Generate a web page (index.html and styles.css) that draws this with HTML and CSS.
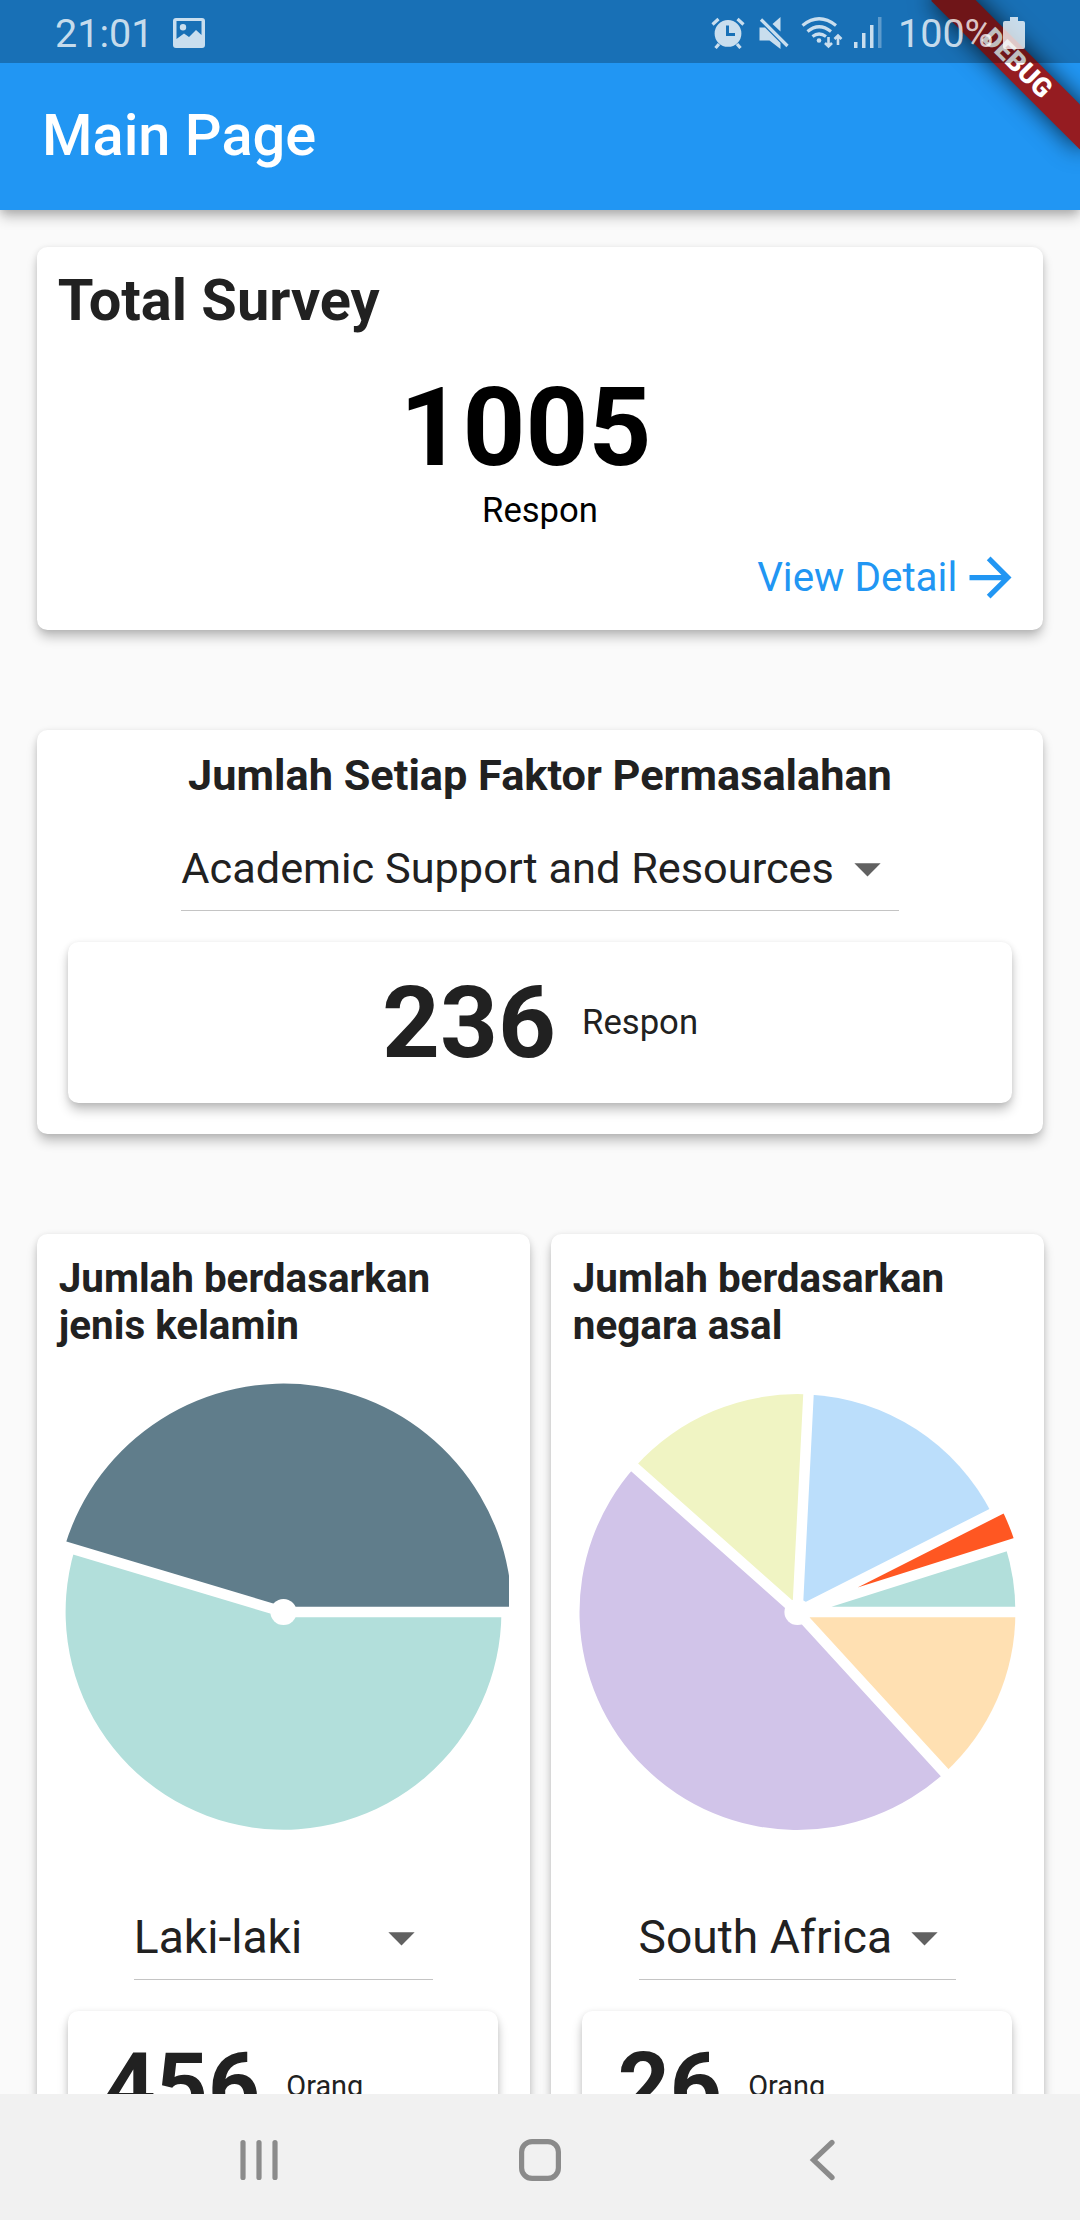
FILE: index.html
```html
<!DOCTYPE html>
<html lang="id">
<head>
<meta charset="utf-8">
<title>Main Page</title>
<link rel="stylesheet" href="styles.css">
</head>
<body>
<div class="screen">
  <header class="header">
    <div class="status-bar">
      <span class="clock">21:01</span>
      <svg class="icon-picture" width="32" height="30" viewBox="0 0 32 30"><path fill-rule="evenodd" d="M3 0H29a3 3 0 0 1 3 3V27a3 3 0 0 1-3 3H3a3 3 0 0 1-3-3V3a3 3 0 0 1 3-3ZM3.500 3V21L11 15.500 16 19 23 12 28.500 17V3ZM10 6a3.200 3.200 0 1 1 0 6.400a3.200 3.200 0 1 1 0-6.400Z"/></svg>
      <div class="status-right">
        <svg class="icon-alarm" width="34" height="32" viewBox="0 0 34 32"><path fill-rule="evenodd" d="M17 3a13.400 13.400 0 1 1 0 26.800a13.400 13.400 0 1 1 0-26.800ZM15 8.500V19H24V16H18V8.500Z"/><path class="line" d="M1.500 7.500L7.500 2M32.500 7.500L26.500 2M4.500 31L8 27M29.500 31L26 27"/></svg>
        <svg class="icon-mute" width="30" height="32" viewBox="0 0 30 32"><path d="M0.500 10.500H6L21.500 26V32L10.500 23.500H0.500ZM13.500 7L21.500 0V14.500Z"/><path class="line" d="M2 2.500L28.500 29"/></svg>
        <svg class="icon-wifi" width="42" height="32" viewBox="0 0 42 32"><path class="line" d="M1.500 8.500Q18 -5 35 8.500M6.500 14.500Q18 5 30 14.500M11.500 19.500Q18 14.500 25 19.500"/><circle cx="18" cy="23.500" r="2.300"/><path class="line thin" d="M27.500 20V29M24 26L27.500 29.500L31 26M37 28V19M33.500 22L37 18.500L40.500 22"/></svg>
        <svg class="icon-signal" width="28" height="31" viewBox="0 0 28 31"><path d="M0 25h3.500v6h-3.500ZM8 16h3.500v15h-3.500ZM16 8h3.500v23h-3.500Z"/><path opacity=".4" d="M24 0h3.500v31h-3.500Z"/></svg>
        <span class="battery-level">100%</span>
        <svg class="icon-battery" width="22" height="32" viewBox="0 0 22 32"><path d="M7 0H15V4H20a2 2 0 0 1 2 2V30a2 2 0 0 1-2 2H2a2 2 0 0 1-2-2V6a2 2 0 0 1 2-2H7Z"/></svg>
      </div>
    </div>
    <h1 class="app-bar">Main Page</h1>
    <div class="ribbon-corner"><div class="ribbon">DEBUG</div></div>
  </header>

  <main class="content">
    <section class="card total">
      <h2 class="total-title">Total Survey</h2>
      <div class="total-count">1005</div>
      <div class="unit total-unit">Respon</div>
      <div class="view-detail">
        <span>View Detail</span>
        <svg width="63" height="63" viewBox="0 0 24 24"><path d="M12 4l-1.410 1.410L16.170 11H4v2h12.170l-5.580 5.590L12 20l8-8z"/></svg>
      </div>
    </section>

    <section class="card factor">
      <h2 class="factor-title">Jumlah Setiap Faktor Permasalahan</h2>
      <div class="dropdown dropdown-factor">
        <span>Academic Support and Resources</span>
        <svg width="63" height="63" viewBox="0 0 24 24"><path d="M7 10l5 5 5-5z"/></svg>
      </div>
      <div class="card result">
        <span class="result-count">236</span>
        <span class="unit">Respon</span>
      </div>
    </section>

    <div class="charts">
      <section class="card chart-card">
        <h2 class="chart-title">Jumlah berdasarkan jenis kelamin</h2>
        <svg class="pie" width="451" height="460" viewBox="-225.500 -230 451 460">
          <path fill="#607d8b" d="M0 0L-218.800 -65.500A228.400 228.400 0 0 1 228.400 0Z"/>
          <path fill="#b2dfdb" d="M0 0H217.900A217.900 217.900 0 1 1 -208.800 -62.500Z"/>
          <path class="gap" d="M0 0H240M0 0L-229.900 -68.800"/>
          <circle r="13.100" fill="#fff"/>
        </svg>
        <div class="dropdown dropdown-gender">
          <span>Laki-laki</span>
          <svg width="63" height="63" viewBox="0 0 24 24"><path d="M7 10l5 5 5-5z"/></svg>
        </div>
        <div class="card result">
          <span class="result-count">456</span>
          <span class="unit">Orang</span>
        </div>
      </section>

      <section class="card chart-card">
        <h2 class="chart-title">Jumlah berdasarkan negara asal</h2>
        <svg class="pie" width="451" height="460" viewBox="-225.500 -230 451 460">
          <path fill="#ffe0b2" d="M0 0H217.900A217.900 217.900 0 0 1 147.200 160.700Z"/>
          <path fill="#d1c4e9" d="M0 0L147.200 160.700A217.900 217.900 0 0 1 -162.900 -144.700Z"/>
          <path fill="#f0f4c3" d="M0 0L-162.900 -144.700A217.900 217.900 0 0 1 11 -217.600Z"/>
          <path fill="#bbdefb" d="M0 0L11 -217.600A217.900 217.900 0 0 1 194.400 -98.400Z"/>
          <path fill="#ff5722" d="M0 0L203.800 -103.200A228.400 228.400 0 0 1 217.800 -68.900Z"/>
          <path fill="#b2dfdb" d="M0 0L207.800 -65.700A217.900 217.900 0 0 1 217.900 0Z"/>
          <path class="gap" d="M0 0H240M0 0L162.100 177M0 0L-179.500 -159.400M0 0L12.100 -239.700M0 0L214.100 -108.400M0 0L228.800 -72.400"/>
          <circle r="13.100" fill="#fff"/>
        </svg>
        <div class="dropdown dropdown-country">
          <span>South Africa</span>
          <svg width="63" height="63" viewBox="0 0 24 24"><path d="M7 10l5 5 5-5z"/></svg>
        </div>
        <div class="card result">
          <span class="result-count">26</span>
          <span class="unit">Orang</span>
        </div>
      </section>
    </div>
  </main>

  <nav class="nav-bar">
    <svg width="42" height="42" viewBox="0 0 42 42"><path d="M5 3.500V38.500M21 3.500V38.500M37 3.500V38.500"/></svg>
    <svg width="42" height="42" viewBox="0 0 42 42"><rect x="2.600" y="2.600" width="36.800" height="36.800" rx="10.500"/></svg>
    <svg width="42" height="42" viewBox="0 0 42 42"><path d="M32 3.500L13.500 21L32 38.500"/></svg>
  </nav>
</div>
</body>
</html>
```
FILE: styles.css
```css
* {
  box-sizing: border-box;
}

body {
  margin: 0;
  font-family: Roboto, "Liberation Sans", sans-serif;
  color: #212121;
}

h1,
h2 {
  margin: 0;
}

svg {
  display: block;
  flex: none;
}

.screen {
  width: 1080px;
  height: 2220px;
  display: flex;
  flex-direction: column;
  overflow: hidden;
  background: #fafafa;
}

/* Header: status bar scrim above the app bar */
.header {
  position: relative;
  z-index: 1;
  flex: none;
  height: 210px;
  background: #2196f3;
  box-shadow: 0 8px 12px -1px rgba(0, 0, 0, .24), 0 2px 8px rgba(0, 0, 0, .12);
}

.status-bar {
  position: relative;
  z-index: 2;
  height: 63px;
  padding: 2px 55px 0 55px;
  display: flex;
  align-items: center;
  background: rgba(0, 0, 0, .25);
  color: rgba(255, 255, 255, .77);
  fill: rgba(255, 255, 255, .77);
  font-size: 39.500px;
  line-height: 46px;
}

.clock {
  padding-top: 3px;
}

.icon-picture {
  margin-left: 20px;
}

.status-right {
  display: flex;
  align-items: center;
  margin-left: auto;
}

.icon-mute {
  margin-left: 14px;
}

.icon-wifi {
  margin-left: 12px;
}

.icon-signal {
  margin-left: 11px;
}

.battery-level {
  width: 105px;
  margin-left: 16px;
  padding-top: 3px;
}

.line {
  fill: none;
  stroke: rgba(255, 255, 255, .77);
  stroke-width: 3.200px;
}

.thin {
  stroke-width: 2.600px;
}

.app-bar {
  height: 147px;
  padding: 0 42px;
  font-size: 57.750px;
  font-weight: 500;
  line-height: 144px;
  color: #fff;
}

.ribbon-corner {
  position: absolute;
  top: 0;
  right: 0;
  z-index: 1;
  width: 260px;
  height: 210px;
  overflow: hidden;
}

.ribbon {
  position: absolute;
  top: 73.500px;
  left: 155px;
  width: 210px;
  height: 31.500px;
  transform: rotate(45deg);
  transform-origin: 105px -73.500px;
  background: #951c21;
  box-shadow: 0 0 24px rgba(0, 0, 0, .75);
  color: #fff;
  font-size: 26.800px;
  font-weight: 900;
  line-height: 31.500px;
  text-align: center;
}

/* Scrolling content */
.content {
  flex: 1;
  min-height: 0;
  overflow: hidden;
  padding: 36.750px 36.750px 0;
  display: flex;
  flex-direction: column;
  gap: 99.750px;
}

.card {
  flex: none;
  border-radius: 10.500px;
  background: #fff;
  box-shadow: 0 8px 12px -1px rgba(0, 0, 0, .24), 0 1px 6px rgba(0, 0, 0, .1);
}

.unit {
  font-size: 34.650px;
  line-height: 40px;
}

.total {
  height: 383.250px;
  padding: 19.500px 21px 0;
}

.total-title {
  font-size: 57.750px;
  line-height: 68px;
}

.total-count {
  margin-top: 30.250px;
  padding-right: 29px;
  font-size: 109.700px;
  font-weight: 700;
  line-height: 125px;
  text-align: center;
  color: #000;
}

.total-unit {
  text-align: center;
  color: #000;
}

.view-detail {
  margin-top: 16.500px;
  display: flex;
  align-items: center;
  justify-content: flex-end;
  gap: 2px;
  color: #2196f3;
  fill: #2196f3;
  font-size: 40.400px;
}

.factor {
  height: 404.250px;
  padding: 21px 31.500px 0;
}

.factor-title {
  font-size: 43.300px;
  line-height: 50px;
  text-align: center;
}

.dropdown {
  display: flex;
  align-items: center;
  justify-content: space-between;
  margin: 0 auto;
  padding-bottom: 10px;
  border-bottom: 1.500px solid #c4c4c4;
  fill: #616161;
  white-space: nowrap;
}

.dropdown-factor {
  width: 717.500px;
  margin-top: 36px;
  font-size: 43.300px;
}

.result {
  display: flex;
  align-items: center;
  gap: 26.250px;
}

.result-count {
  font-weight: 700;
}

.factor .result {
  height: 161px;
  margin-top: 31px;
  justify-content: center;
}

.factor .result-count {
  font-size: 101px;
}

.charts {
  flex: none;
  display: flex;
  gap: 21px;
}

.chart-card {
  flex: 1;
  height: 980px;
  padding: 21px 21px 0;
}

.chart-title {
  padding-left: 1px;
  font-size: 40.400px;
  line-height: 47.300px;
}

.pie {
  margin-top: 33px;
}

.gap {
  fill: none;
  stroke: #fff;
  stroke-width: 10.500px;
}

.chart-card .dropdown {
  margin-top: 63.750px;
  font-size: 46.200px;
}

.chart-card .dropdown span {
  padding-bottom: 2px;
}

.dropdown-gender {
  width: 299px;
}

.dropdown-country {
  width: 317.500px;
}

.chart-card .result {
  height: 149px;
  margin: 31px 10.500px 0;
  padding-left: 35.500px;
}

.chart-card .result-count {
  font-size: 90.800px;
}

.chart-card .unit {
  font-size: 28.900px;
}

/* System navigation */
.nav-bar {
  position: relative;
  flex: none;
  height: 126px;
  padding: 6px 238px 0;
  display: flex;
  align-items: center;
  justify-content: space-between;
  background: #f1f1f1;
}

.nav-bar svg {
  fill: none;
  stroke: #8b8b8b;
  stroke-width: 5.200px;
  stroke-linecap: round;
}
```
